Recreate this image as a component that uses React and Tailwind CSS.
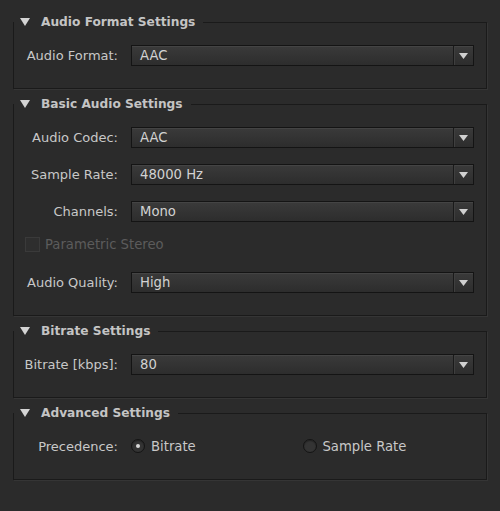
import React from "react";

const font = { fontFamily: '"DejaVu Sans", "Noto Sans", sans-serif' };

const Section = ({ title, children }) => (
  <fieldset className="border border-[#1a1a1a] shadow-[1px_1px_0_#353535] mt-[7px] first:mt-[14px] min-w-0">
    <legend className="flex items-center h-4 pl-[6px] pr-[8px]">
      <svg width="10" height="8" viewBox="0 0 10 8" className="mr-[11px]">
        <path d="M0 0 L10 0 L5 8 Z" fill="#d4d4d4" />
      </svg>
      <span className="text-[12.2px] font-bold text-[#c4c4c4] leading-4">{title}</span>
    </legend>
    <div className="pt-[15px] pb-[22px] pr-[12px]">{children}</div>
  </fieldset>
);

const Select = ({ value }) => (
  <div className="flex-1 h-[21px] flex border border-[#141414] bg-gradient-to-b from-[#3a3a3a] to-[#2d2d2d] shadow-[inset_0_1px_0_#444]">
    <div className="flex-1 flex items-center pl-2 text-[13.2px] text-[#d2d2d2]">{value}</div>
    <div className="w-5 flex items-center justify-center border-l border-[#1a1a1a] shadow-[inset_1px_0_0_#3f3f3f]">
      <svg width="9" height="6" viewBox="0 0 9 6">
        <path d="M0 0 L9 0 L4.5 6 Z" fill="#d0d0d0" />
      </svg>
    </div>
  </div>
);

const Row = ({ label, value, className = "" }) => (
  <div className={"flex items-center " + className}>
    <div className="w-[104px] text-right text-[13px] text-[#c8c8c8] mr-[13px] whitespace-nowrap">{label}</div>
    <Select value={value} />
  </div>
);

const Radio = ({ checked, label }) => (
  <div className="flex items-center">
    <div className="w-[14px] h-[14px] rounded-full border border-[#141414] bg-[#343434] flex items-center justify-center mr-[6px] shadow-[inset_0_1px_1px_#222]">
      {checked && <div className="w-[4px] h-[4px] rounded-full bg-[#d8d8d8]" />}
    </div>
    <span className="text-[13.2px] text-[#c8c8c8]">{label}</span>
  </div>
);

export default function App() {
  return (
    <div className="w-[500px] h-[511px] bg-[#2b2b2b] px-[13px] overflow-hidden" style={font}>
      <Section title="Audio Format Settings">
        <Row label="Audio Format:" value="AAC" />
      </Section>
      <Section title="Basic Audio Settings">
        <Row label="Audio Codec:" value="AAC" />
        <Row label="Sample Rate:" value="48000 Hz" className="mt-4" />
        <Row label="Channels:" value="Mono" className="mt-4" />
        <div className="flex items-center h-[21px] mt-3 pl-[11px]">
          <div className="w-[15px] h-[15px] border border-[#3a3a3a] bg-[#2e2e2e] mr-[5px]" />
          <span className="text-[13.2px] text-[#5c5c5c]">Parametric Stereo</span>
        </div>
        <Row label="Audio Quality:" value="High" className="mt-[17px]" />
      </Section>
      <Section title="Bitrate Settings">
        <Row label="Bitrate [kbps]:" value="80" />
      </Section>
      <Section title="Advanced Settings">
        <div className="flex items-center h-[21px]">
          <div className="w-[104px] text-right text-[13px] text-[#c8c8c8] mr-[13px]">Precedence:</div>
          <div className="flex-1 grid grid-cols-2">
            <Radio checked label="Bitrate" />
            <Radio label="Sample Rate" />
          </div>
        </div>
      </Section>
    </div>
  );
}
